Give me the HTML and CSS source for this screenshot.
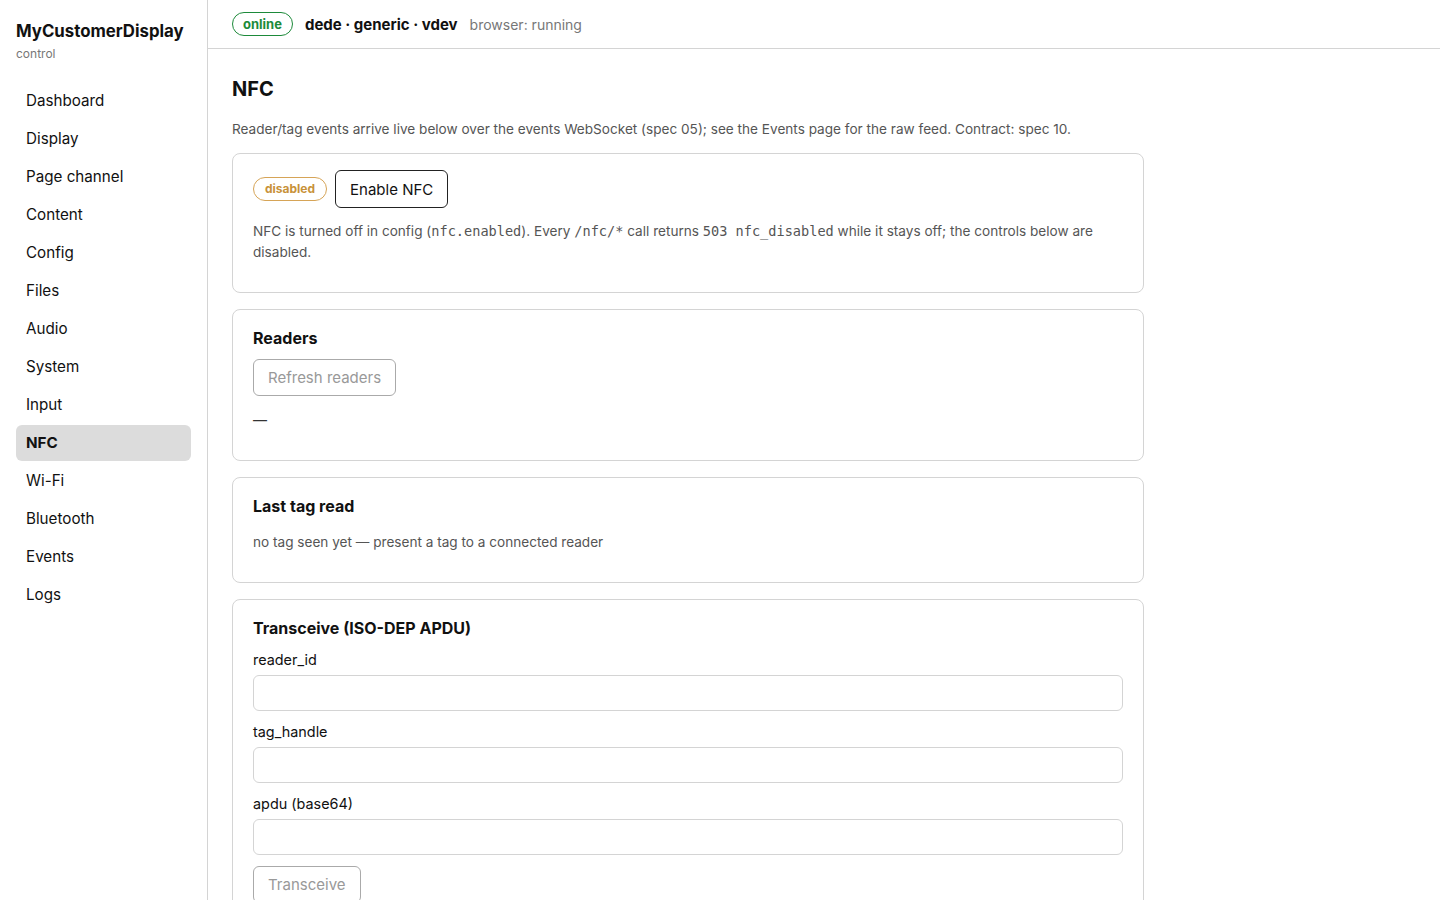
FILE: index.html
```html
<!DOCTYPE html>
<html lang="en">
<head>
  <meta charset="UTF-8">
  <title>MyCustomerDisplay · NFC</title>
  <meta name="viewport" content="width=device-width, initial-scale=1">
  <link rel="stylesheet" href="styles.css">
</head>
<body>
  <div class="layout">
    <aside class="sidebar">
      <div class="brand">
        <div class="brand-name">MyCustomerDisplay</div>
        <div class="brand-sub">control</div>
      </div>
      <nav class="nav">
        <a href="#">Dashboard</a>
        <a href="#">Display</a>
        <a href="#">Page channel</a>
        <a href="#">Content</a>
        <a href="#">Config</a>
        <a href="#">Files</a>
        <a href="#">Audio</a>
        <a href="#">System</a>
        <a href="#">Input</a>
        <a href="#" class="active">NFC</a>
        <a href="#">Wi-Fi</a>
        <a href="#">Bluetooth</a>
        <a href="#">Events</a>
        <a href="#">Logs</a>
      </nav>
    </aside>

    <div class="main">
      <header class="topbar">
        <span class="pill pill-online">online</span>
        <span class="device">dede · generic · vdev</span>
        <span class="muted">browser: running</span>
      </header>

      <section class="content">
        <h1>NFC</h1>
        <p class="lead">Reader/tag events arrive live below over the events WebSocket (spec 05); see the Events page for the raw feed. Contract: spec 10.</p>

        <div class="card">
          <div class="row">
            <span class="pill pill-warn">disabled</span>
            <button class="btn">Enable NFC</button>
          </div>
          <p class="note">NFC is turned off in config (<code>nfc.enabled</code>). Every <code>/nfc/*</code> call returns <code>503 nfc_disabled</code> while it stays off; the controls below are disabled.</p>
        </div>

        <div class="card">
          <h3>Readers</h3>
          <button class="btn" disabled>Refresh readers</button>
          <p class="dash">—</p>
        </div>

        <div class="card">
          <h3>Last tag read</h3>
          <p class="note">no tag seen yet — present a tag to a connected reader</p>
        </div>

        <div class="card">
          <h3>Transceive (ISO-DEP APDU)</h3>
          <label class="field">
            <span>reader_id</span>
            <input type="text" disabled>
          </label>
          <label class="field">
            <span>tag_handle</span>
            <input type="text" disabled>
          </label>
          <label class="field">
            <span>apdu (base64)</span>
            <input type="text" disabled>
          </label>
          <button class="btn" disabled>Transceive</button>
          <p class="dash">—</p>
        </div>

        <div class="card">
          <h3>Write NDEF</h3>
          <label class="field">
            <span>reader_id</span>
            <input type="text" disabled>
          </label>
          <label class="field">
            <span>text</span>
            <input type="text" disabled>
          </label>
          <button class="btn" disabled>Write</button>
        </div>
      </section>
    </div>
  </div>
</body>
</html>
```

FILE: styles.css
```css
* {
  box-sizing: border-box;
}
body {
  margin: 0;
  font-family: Inter, 'Noto Sans', sans-serif;
  color: #111;
  background: #fff;
}
.layout {
  display: grid;
  grid-template-columns: 208px 1fr;
  height: 100vh;
  overflow: hidden;
}
.sidebar {
  border-right: 1px solid #d4d4d4;
  padding: 20px 16px;
  height: 100vh;
}
.brand {
  margin-bottom: 22px;
}
.brand-name {
  font-size: 16.8px;
  font-weight: 700;
  line-height: 22px;
}
.brand-sub {
  font-size: 12px;
  color: #777;
  margin-top: 4px;
}
.nav {
  display: flex;
  flex-direction: column;
  gap: 2px;
}
.nav a {
  display: block;
  padding: 0 10px;
  height: 36px;
  line-height: 36px;
  font-size: 15.2px;
  color: #111;
  text-decoration: none;
  border-radius: 6px;
}
.nav a.active {
  background: #dcdcdc;
  font-weight: 700;
}
.main {
  height: 100vh;
  overflow-y: scroll;
}
.main::-webkit-scrollbar {
  width: 15px;
  background: #fafafa;
}
.main::-webkit-scrollbar-thumb {
  background: #8c8c8c;
  border: 3px solid #fafafa;
  border-radius: 8px;
}
.topbar {
  display: flex;
  align-items: center;
  gap: 12px;
  height: 49px;
  padding: 0 24px;
  border-bottom: 1px solid #d4d4d4;
}
.pill {
  display: inline-block;
  border-radius: 999px;
  border: 1px solid;
  font-size: 12px;
  font-weight: 700;
  line-height: 22px;
  padding: 0 10px;
}
.pill-online {
  color: #1d8a3a;
  border-color: #1d8a3a;
  font-size: 13px;
}
.pill-warn {
  color: #c8923a;
  border-color: #d6a457;
  padding: 0 11px;
}
.device {
  font-size: 15px;
  font-weight: 700;
}
.muted {
  color: #777;
  font-size: 14px;
}
.content {
  padding: 27px 24px 40px;
  max-width: 960px;
}
h1 {
  font-size: 20px;
  margin: 0 0 17px;
  line-height: 26px;
}
.lead {
  font-size: 13.6px;
  color: #555;
  margin: 0 0 14px;
  line-height: 20px;
}
.card {
  border: 1px solid #d4d4d4;
  border-radius: 8px;
  padding: 16px 20px;
  margin-bottom: 16px;
}
.card h3 {
  font-size: 16px;
  margin: 1px 0 10px;
  line-height: 22px;
}
.row {
  display: flex;
  align-items: center;
  gap: 8px;
}
.btn {
  font-family: inherit;
  font-size: 15px;
  color: #111;
  background: #fff;
  border: 1px solid #222;
  border-radius: 6px;
  height: 38px;
  padding: 0 14px;
}
.card > .btn:disabled {
  height: 37px;
}
.btn:disabled {
  color: #999;
  border-color: #aaa;
}
.note {
  font-size: 13.6px;
  color: #555;
  line-height: 21px;
  margin: 13px 0 13px;
}
.card h3 + .note {
  margin: 15px 0 13px;
}
code {
  font-family: 'DejaVu Sans Mono', monospace;
  font-size: 13.6px;
  color: #555;
  line-height: 1;
}
.dash {
  margin: 14px 0 14px;
  font-size: 14px;
  color: #333;
  line-height: 20px;
}
.field {
  display: flex;
  flex-direction: column;
  gap: 5px;
  margin-bottom: 11px;
}
.card h3 + .field {
  margin-top: 11px;
}
.field span {
  font-size: 14.4px;
  line-height: 20px;
}
.field input {
  height: 36px;
  border: 1px solid #d4d4d4;
  border-radius: 6px;
  background: #fff;
  font-family: inherit;
  font-size: 14px;
}
```
